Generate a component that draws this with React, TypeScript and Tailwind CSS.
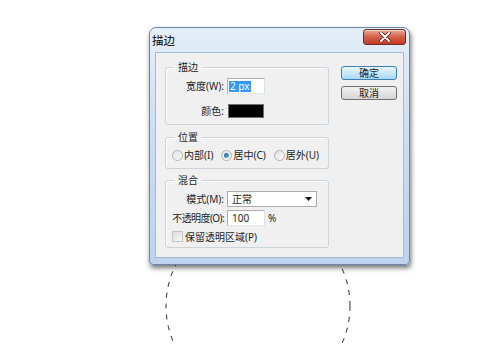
import React from 'react'

const font = "font-['Noto_Sans','Noto_Sans_CJK_SC',sans-serif]"

function Group({ title, className, children }: { title: string; className?: string; children: React.ReactNode }) {
  return (
    <fieldset className={`border border-[#ccd3d9] rounded-[3px] shadow-[inset_1px_1px_0_#ffffff] ${className ?? ''}`}>
      <legend className="ml-[8px] px-[4px] text-[10px] leading-[12px]">{title}</legend>
      {children}
    </fieldset>
  )
}

function Label({ children, tight }: { children: React.ReactNode; tight?: boolean }) {
  return (
    <div className={`w-[61px] shrink-0 text-right pr-[3px] leading-[12px] whitespace-nowrap ${tight ? 'tracking-[-0.6px]' : ''}`}>
      {children}
    </div>
  )
}

function Radio({ checked, label }: { checked?: boolean; label: string }) {
  return (
    <div className="flex items-center">
      <div className="w-[11px] h-[11px] rounded-full border border-[#b2b2b2] bg-gradient-to-br from-[#e2e2e2] to-[#fbfbfb] flex items-center justify-center">
        {checked && <div className="w-[5px] h-[5px] rounded-full bg-gradient-to-br from-[#1f5d9c] to-[#6eb3ea]" />}
      </div>
      <span className="ml-[1px] leading-[12px]">{label}</span>
    </div>
  )
}

function Button({ label, primary }: { label: string; primary?: boolean }) {
  return (
    <div
      className={`w-[56px] h-[14px] rounded-[3px] border flex items-center justify-center text-[10px] leading-[12px] ${
        primary
          ? 'border-[#3c7fb1] bg-gradient-to-b from-[#eaf6fd] to-[#a7d9f5]'
          : 'border-[#707070] bg-gradient-to-b from-[#f2f2f2] to-[#d5d5d5]'
      }`}
    >
      {label}
    </div>
  )
}

function Dialog() {
  return (
    <div className="w-[261px] h-[238px] flex flex-col border border-[#6d87a8] rounded-t-[7px] rounded-b-[4px] bg-gradient-to-b from-[#e4eef9] via-[#c9dcf2] to-[#bcd3ef] shadow-[1px_3px_5px_rgba(0,0,0,0.55)]">
      {/* titlebar */}
      <div className="h-[24px] flex items-start justify-between">
        <div className="pl-[2px] pt-[7px] text-[11.5px] leading-[12px] text-black">描边</div>
        <div className="mt-[1px] mr-[3px] w-[43px] h-[16px] rounded-[3px] border border-[#6b2d22] bg-gradient-to-b from-[#e9a998] via-[#d0604a] to-[#c23b23] flex items-center justify-center shadow-[inset_0_1px_0_rgba(255,255,255,0.5)]">
          <svg width="12" height="10" viewBox="0 0 12 10">
            <path d="M2 1 L10 9 M10 1 L2 9" stroke="#5a1a10" strokeWidth="3.4" strokeLinecap="round" />
            <path d="M2 1 L10 9 M10 1 L2 9" stroke="#ffffff" strokeWidth="2" strokeLinecap="round" />
          </svg>
        </div>
      </div>

      {/* client area */}
      <div className="mx-[5px] mb-[6px] flex-1 border border-[#a4b9d3] bg-[#f0f0f0] flex text-[10px] text-[#1e1e1e]">
        <div className="ml-[9px] pt-[8px] w-[164px] flex flex-col">
          <Group title="描边" className="pt-[5px] pb-[6px]">
            <div className="flex items-center h-[16px]">
              <Label>宽度(W):</Label>
              <div className="w-[38px] h-[16px] bg-white border border-[#abadb3] border-b-[#e3e9ef] border-r-[#dbdfe6] flex items-center pl-[1px]">
                <span className="bg-[#3399ff] text-white leading-[11px] px-[1px]">2 px</span>
              </div>
            </div>
            <div className="flex items-center h-[14px] mt-[10px]">
              <Label>颜色:</Label>
              <div className="ml-[1px] w-[36px] h-[14px] bg-black border border-[#6f6f6f]" />
            </div>
          </Group>

          <Group title="位置" className="mt-[6px] pt-[5px] pb-[6px]">
            <div className="flex items-center h-[14px] pl-[6px] gap-[8px]">
              <Radio label="内部(I)" />
              <Radio checked label="居中(C)" />
              <Radio label="居外(U)" />
            </div>
          </Group>

          <Group title="混合" className="mt-[5px] pt-[5px] pb-[4px]">
            <div className="flex items-center h-[16px]">
              <Label>模式(M):</Label>
              <div className="w-[90px] h-[16px] bg-white border border-[#abadb3] flex items-center justify-between pl-[4px] pr-[4px]">
                <span className="leading-[12px]">正常</span>
                <svg width="7" height="4" viewBox="0 0 7 4">
                  <path d="M0 0 H7 L3.5 4 Z" fill="#111" />
                </svg>
              </div>
            </div>
            <div className="flex items-center h-[16px] mt-[3px]">
              <Label tight>不透明度(O):</Label>
              <div className="w-[38px] h-[16px] bg-white border border-[#abadb3] border-b-[#e3e9ef] border-r-[#dbdfe6] flex items-center pl-[4px]">
                <span className="leading-[12px]">100</span>
              </div>
              <span className="ml-[3px] leading-[12px]">%</span>
            </div>
            <div className="flex items-center h-[13px] mt-[4px] pl-[6px]">
              <div className="w-[11px] h-[11px] border border-[#c4c4c4] bg-gradient-to-br from-[#dedede] to-[#f8f8f8]" />
              <span className="ml-[2px] leading-[12px]">保留透明区域(P)</span>
            </div>
          </Group>
        </div>

        <div className="ml-[12px] pt-[13px] flex flex-col gap-[6px]">
          <Button primary label="确定" />
          <Button label="取消" />
        </div>
      </div>
    </div>
  )
}

export default function App() {
  return (
    <div className={`relative w-[500px] h-[345px] overflow-hidden bg-white ${font}`}>
      <svg className="absolute inset-0" width="500" height="345">
        <circle cx="258" cy="306" r="92" fill="none" stroke="#2a2a2a" strokeWidth="1" strokeDasharray="5 6" />
      </svg>
      <div className="relative pl-[149px] pt-[27px]">
        <Dialog />
      </div>
    </div>
  )
}
